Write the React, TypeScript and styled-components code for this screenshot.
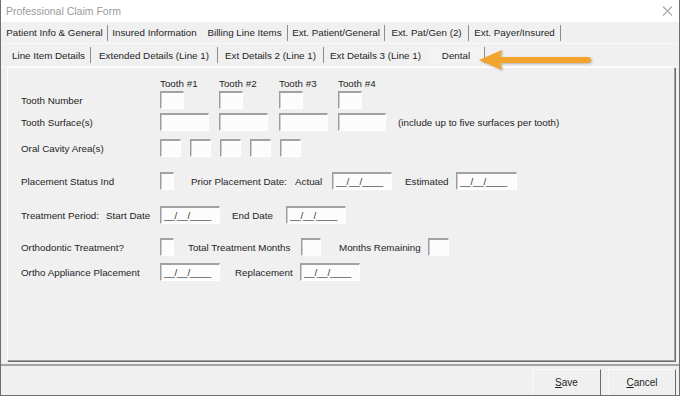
import React from 'react'
import styled, { createGlobalStyle } from 'styled-components'

const GlobalStyle = createGlobalStyle`
  html, body {
    margin: 0;
    padding: 0;
    background: #f0f0f0;
  }
  body {
    font-family: 'Liberation Sans', Arial, sans-serif;
  }
`

const Window = styled.div`
  position: relative;
  width: 680px;
  height: 396px;
  box-sizing: border-box;
  border: 1px solid #6f6f6f;
  border-top: none;
  background: #f0f0f0;
  display: flex;
  flex-direction: column;
  overflow: hidden;
  font-size: 9.8px;
  color: #1e1e1e;
`

const TitleBar = styled.div`
  height: 22px;
  flex-shrink: 0;
  background: #fff;
  display: flex;
  align-items: center;
  justify-content: space-between;
  padding: 0 6px 0 5px;
  font-size: 10.5px;
  color: #9a9a9a;
`

const CloseIcon = styled.svg`
  display: block;
`

const TabRow = styled.div<{ $pl: number; $h: number }>`
  height: ${({ $h }) => $h}px;
  flex-shrink: 0;
  display: flex;
  align-items: center;
  padding-left: ${({ $pl }) => $pl}px;
  border-bottom: 1px solid #f8f8f8;
  box-sizing: border-box;
`

const Tab = styled.div<{ $w: number; $sep?: boolean; $active?: boolean }>`
  width: ${({ $w }) => $w}px;
  height: 16px;
  box-sizing: border-box;
  display: flex;
  align-items: center;
  justify-content: center;
  white-space: nowrap;
  border-right: 1px solid ${({ $sep }) => ($sep ? '#8c8c8c' : 'transparent')};
  background: ${({ $active }) => ($active ? '#f3f3f3' : 'transparent')};
`

const Panel = styled.div`
  height: 294px;
  flex-shrink: 0;
  margin: 0 4px 0 6px;
  box-sizing: border-box;
  border-top: 1px solid #fff;
  border-left: 1px solid #fff;
  border-right: 1px solid #a0a0a0;
  border-bottom: 1px solid #a0a0a0;
  box-shadow: 1px 1px 0 #6e6e6e;
  padding: 9px 0 0 13px;
`

const FormRow = styled.div<{ $mt?: number; $h?: number }>`
  display: flex;
  align-items: center;
  height: ${({ $h }) => $h ?? 18}px;
  margin-top: ${({ $mt }) => $mt ?? 0}px;
  white-space: nowrap;
`

const RowLabel = styled.div`
  width: 139px;
  flex-shrink: 0;
  display: flex;
  align-items: center;
`

const Label = styled.span<{ $w?: number; $ml?: number }>`
  display: inline-block;
  flex-shrink: 0;
  width: ${({ $w }) => ($w ? `${$w}px` : 'auto')};
  margin-left: ${({ $ml }) => $ml ?? 0}px;
`

const ToothCells = styled.div`
  display: grid;
  grid-template-columns: 59px 60px 59px 48px auto;
  align-items: center;
`

const CavityCells = styled.div`
  display: flex;
  gap: 9px;
`

const Field = styled.div<{ $w: number; $ml?: number }>`
  width: ${({ $w }) => $w}px;
  height: 18px;
  margin-left: ${({ $ml }) => $ml ?? 0}px;
  flex-shrink: 0;
  box-sizing: border-box;
  background: #fcfcfc;
  border-top: 2px solid #a2a2a2;
  border-left: 1px solid #9c9c9c;
  border-right: 1px solid #fff;
  border-bottom: 1px solid #fff;
  box-shadow: inset 1px 0 0 #cfcfcf;
  display: flex;
  align-items: center;
  padding-left: 3px;
  color: #333;
  letter-spacing: -0.2px;
`

const DateField = ({ w, ml }: { w: number; ml?: number }) => (
  <Field $w={w} $ml={ml}>__/__/____</Field>
)

const Footer = styled.div`
  flex: 1;
  margin-top: 3px;
  border-top: 2px solid #a4a4a4;
  display: flex;
  justify-content: flex-end;
  align-items: flex-start;
  gap: 7px;
  padding: 3px 3px 0 0;
  overflow: hidden;
`

const Button = styled.div<{ $w: number }>`
  width: ${({ $w }) => $w}px;
  height: 32px;
  flex-shrink: 0;
  box-sizing: border-box;
  border-top: 1px solid #fafafa;
  border-left: 1px solid #fafafa;
  border-right: 1px solid #6a6a6a;
  text-align: center;
  line-height: 26px;
  font-size: 10px;
`

const Arrow = styled.svg`
  position: absolute;
  left: 470px;
  top: 44px;
  filter: drop-shadow(1px 1px 1px rgba(0, 0, 0, 0.25));
`

export default function App() {
  return (
    <>
      <GlobalStyle />
      <Window>
        <TitleBar>
          <span>Professional Claim Form</span>
          <CloseIcon width="11" height="10" viewBox="0 0 11 10">
            <path d="M1 0.5 L10 9.5 M10 0.5 L1 9.5" stroke="#a8a8a8" strokeWidth="1.1" />
          </CloseIcon>
        </TitleBar>

        <TabRow $pl={1} $h={22}>
          <Tab $w={106} $sep>Patient Info &amp; General</Tab>
          <Tab $w={94}>Insured Information</Tab>
          <Tab $w={86} $sep>Billing Line Items</Tab>
          <Tab $w={97} $sep>Ext. Patient/General</Tab>
          <Tab $w={84} $sep>Ext. Pat/Gen (2)</Tab>
          <Tab $w={92} $sep>Ext. Payer/Insured</Tab>
        </TabRow>

        <TabRow $pl={6} $h={23}>
          <Tab $w={84} $sep>Line Item Details</Tab>
          <Tab $w={127} $sep>Extended Details (Line 1)</Tab>
          <Tab $w={106} $sep>Ext Details 2 (Line 1)</Tab>
          <Tab $w={104}>Ext Details 3 (Line 1)</Tab>
          <Tab $w={57} $sep $active>Dental</Tab>
        </TabRow>

        <Panel>
          <FormRow $h={12}>
            <RowLabel />
            <ToothCells>
              <Label>Tooth #1</Label>
              <Label>Tooth #2</Label>
              <Label>Tooth #3</Label>
              <Label>Tooth #4</Label>
            </ToothCells>
          </FormRow>

          <FormRow $mt={2}>
            <RowLabel>Tooth Number</RowLabel>
            <ToothCells>
              <Field $w={24} />
              <Field $w={24} />
              <Field $w={24} />
              <Field $w={24} />
            </ToothCells>
          </FormRow>

          <FormRow $mt={4}>
            <RowLabel>Tooth Surface(s)</RowLabel>
            <ToothCells>
              <Field $w={49} />
              <Field $w={49} />
              <Field $w={49} />
              <Field $w={48} />
              <Label $ml={12}>(include up to five surfaces per tooth)</Label>
            </ToothCells>
          </FormRow>

          <FormRow $mt={8}>
            <RowLabel>Oral Cavity Area(s)</RowLabel>
            <CavityCells>
              <Field $w={21} />
              <Field $w={21} />
              <Field $w={21} />
              <Field $w={21} />
              <Field $w={21} />
            </CavityCells>
          </FormRow>

          <FormRow $mt={15}>
            <RowLabel>Placement Status Ind</RowLabel>
            <Field $w={14} />
            <Label $ml={17} $w={104}>Prior Placement Date:</Label>
            <Label $w={37}>Actual</Label>
            <DateField w={60} />
            <Label $ml={13} $w={51}>Estimated</Label>
            <DateField w={61} />
          </FormRow>

          <FormRow $mt={16}>
            <RowLabel>
              <Label $w={85}>Treatment Period:</Label>
              <Label>Start Date</Label>
            </RowLabel>
            <DateField w={60} />
            <Label $ml={12} $w={54}>End Date</Label>
            <DateField w={60} />
          </FormRow>

          <FormRow $mt={14}>
            <RowLabel>Orthodontic Treatment?</RowLabel>
            <Field $w={14} />
            <Label $ml={14} $w={113}>Total Treatment Months</Label>
            <Field $w={20} />
            <Label $ml={18} $w={89}>Months Remaining</Label>
            <Field $w={21} />
          </FormRow>

          <FormRow $mt={7}>
            <RowLabel>Ortho Appliance Placement</RowLabel>
            <DateField w={60} />
            <Label $ml={15} $w={65}>Replacement</Label>
            <DateField w={60} />
          </FormRow>
        </Panel>

        <Footer>
          <Button $w={69}>
            <u>S</u>ave
          </Button>
          <Button $w={68}>
            <u>C</u>ancel
          </Button>
        </Footer>

        <Arrow width="130" height="32" viewBox="0 0 130 32">
          <path
            d="M8 16 L31 6 L29.5 13 L117 13 A3 3 0 0 1 117 19 L29.5 19 L31 26 Z"
            fill="#f2a42c"
          />
        </Arrow>
      </Window>
    </>
  )
}
